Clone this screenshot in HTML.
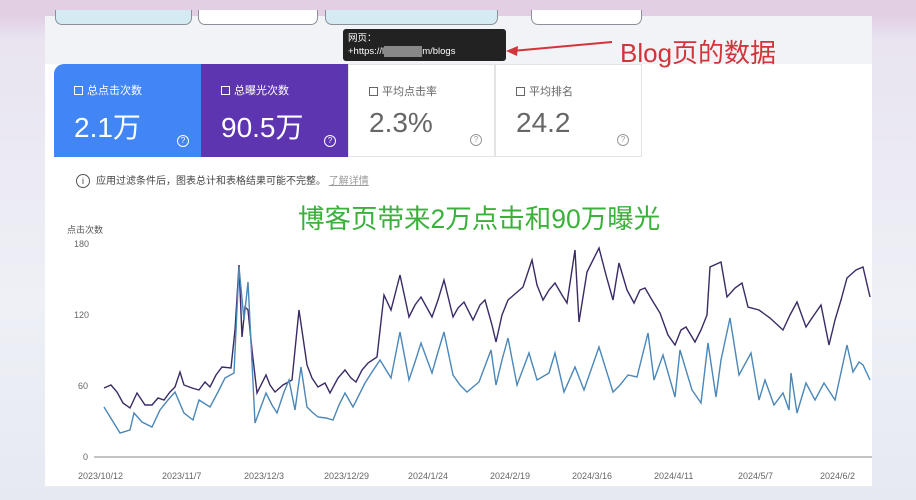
<!DOCTYPE html>
<html><head><meta charset="utf-8"><style>
*{margin:0;padding:0;box-sizing:border-box}
body{width:916px;height:500px;overflow:hidden;background:linear-gradient(180deg,#e2cfe4 0,#e2cfe4 16px,#e9e4f0 40px,#eef0f6 300px,#e7e9f2 500px);font-family:"Liberation Sans","Noto Sans CJK SC",sans-serif;position:relative}
.panel{position:absolute;left:45px;top:16px;width:827px;height:470px;background:#fff}
.top{position:absolute;left:0;top:0;width:827px;height:48px;background:#f2f3f7}
.chip{position:absolute;top:-6px;height:15px;border:1px solid #8a8f99;border-top:none;border-radius:0 0 7px 7px}
.card{position:absolute;top:48px;width:147px;height:93px;color:#fff}
.card .l{position:absolute;left:20px;top:18px;font-size:11px}
.card .v{position:absolute;left:20px;top:42px;font-size:28px}
.card .q{position:absolute;right:12px;bottom:10px;width:12px;height:12px;border:1px solid currentColor;border-radius:50%;font-size:8px;text-align:center;line-height:10px}
.cb{display:inline-block;width:9px;height:9px;border:1px solid currentColor;margin-right:4px;vertical-align:-1px}
</style></head><body>
<div class="panel">
<div class="top">
<div class="chip" style="left:10px;width:137px;background:#d4ebf3"></div>
<div class="chip" style="left:153px;width:120px;background:#fff"></div>
<div class="chip" style="left:280px;width:173px;background:#d4ebf3"></div>
<div class="chip" style="left:486px;width:111px;background:#fff"></div>
</div>
<div style="position:absolute;left:298px;top:13px;width:163px;height:32px;background:#222;border-radius:3px;color:#fff;font-size:9.5px;padding:3px 5px;line-height:13px">网页：<br>+https://l<span style="background:#888;color:#888">xxxxxxxx</span>m/blogs</div>
<div class="card" style="left:9px;background:#4285f4;border-radius:10px 0 0 0"><div class="l"><span class="cb"></span>总点击次数</div><div class="v">2.1万</div><div class="q">?</div></div>
<div class="card" style="left:156px;background:#5e35b1"><div class="l"><span class="cb"></span>总曝光次数</div><div class="v">90.5万</div><div class="q">?</div></div>
<div class="card" style="left:303px;color:#666;border:1px solid #e3e3e3"><div class="l"><span class="cb"></span>平均点击率</div><div class="v">2.3%</div><div class="q" style="color:#999">?</div></div>
<div class="card" style="left:450px;color:#666;border:1px solid #e3e3e3"><div class="l"><span class="cb"></span>平均排名</div><div class="v">24.2</div><div class="q" style="color:#999">?</div></div>
<div style="position:absolute;left:31px;top:156px;font-size:10px;color:#444"><span style="display:inline-block;width:14px;height:14px;border:1px solid #555;border-radius:50%;text-align:center;font-size:9px;line-height:12px;margin-right:6px">i</span>应用过滤条件后，图表总计和表格结果可能不完整。 <span style="color:#999;text-decoration:underline">了解详情</span></div>
</div>
<div style="position:absolute;left:620px;top:33px;font-size:26px;color:#d2343c">Blog页的数据</div>
<svg style="position:absolute;left:0;top:0" width="916" height="500">
<line x1="612" y1="42" x2="512" y2="51" stroke="#d2343c" stroke-width="2"/><polygon points="506,51 518,46 517,56" fill="#d2343c"/>
<text x="298" y="228" font-size="26.5" fill="#3bb13b" font-family="Liberation Sans,Noto Sans CJK SC,sans-serif">博客页带来2万点击和90万曝光</text>
<text x="67" y="233" font-size="9" fill="#555" font-family="Liberation Sans,Noto Sans CJK SC,sans-serif">点击次数</text>
<g font-size="9" fill="#666" font-family="Liberation Sans,sans-serif">
<text x="74" y="247">180</text><text x="74" y="318">120</text><text x="78" y="389">60</text><text x="83" y="460">0</text>
<text x="78" y="479">2023/10/12</text><text x="162" y="479">2023/11/7</text><text x="244" y="479">2023/12/3</text><text x="324" y="479">2023/12/29</text><text x="408" y="479">2024/1/24</text><text x="490" y="479">2024/2/19</text><text x="572" y="479">2024/3/16</text><text x="654" y="479">2024/4/11</text><text x="738" y="479">2024/5/7</text><text x="820" y="479">2024/6/2</text>
</g>
<line x1="94" y1="457" x2="872" y2="457" stroke="#888" stroke-width="1"/>
<polyline fill="none" stroke="#3a2a66" stroke-width="1.4" points="104,388 111,385 117,392 123,403 130,408 137,393 145,405 152,405 158,398 164,400 170,392 175,387 180,372 184,385 192,388 199,390 205,382 210,387 216,375 222,367 231,368 235,330 239,265 242,337 245,307 248,310 252,350 257,393 266,375 270,385 275,392 283,385 292,380 299,310 307,365 312,378 318,387 325,383 330,393 338,378 345,370 351,378 356,382 362,370 368,363 377,357 384,295 391,310 400,275 409,317 415,305 421,297 432,317 438,300 444,280 453,317 458,308 464,302 473,320 480,305 485,300 492,325 496,342 502,315 508,300 523,287 532,260 537,285 543,300 549,290 555,283 562,295 567,303 575,250 579,322 587,272 599,248 606,275 613,300 619,263 627,290 634,303 640,290 645,288 652,300 660,313 668,335 675,345 681,330 686,327 695,342 701,330 707,315 710,267 721,262 727,297 735,288 742,283 748,307 759,310 770,318 783,330 790,315 797,302 806,327 812,318 821,305 829,345 835,320 841,300 847,278 856,270 863,267 870,297"/>
<polyline fill="none" stroke="#4b87b8" stroke-width="1.4" points="104,407 112,420 120,433 130,430 134,413 142,422 152,427 160,410 168,400 175,392 184,413 193,420 199,400 210,407 218,392 225,378 234,373 239,267 244,320 248,282 255,423 266,393 272,405 277,413 284,392 289,380 295,410 301,367 307,407 312,412 318,417 326,418 333,420 339,405 345,393 353,407 359,395 365,383 372,372 380,360 391,378 400,332 409,380 415,362 421,343 432,373 438,352 444,332 453,375 460,385 467,392 479,382 491,350 496,385 502,360 508,338 517,385 529,353 537,380 549,373 555,353 564,392 575,367 584,390 599,347 613,392 620,385 628,375 637,377 648,333 654,380 663,355 675,397 680,350 692,390 701,403 708,343 716,397 721,360 730,318 739,375 751,353 759,400 765,380 774,405 783,393 789,410 791,373 797,413 806,383 815,400 824,383 835,400 847,345 853,372 859,362 863,365 870,380"/>
</svg>
</body></html>
